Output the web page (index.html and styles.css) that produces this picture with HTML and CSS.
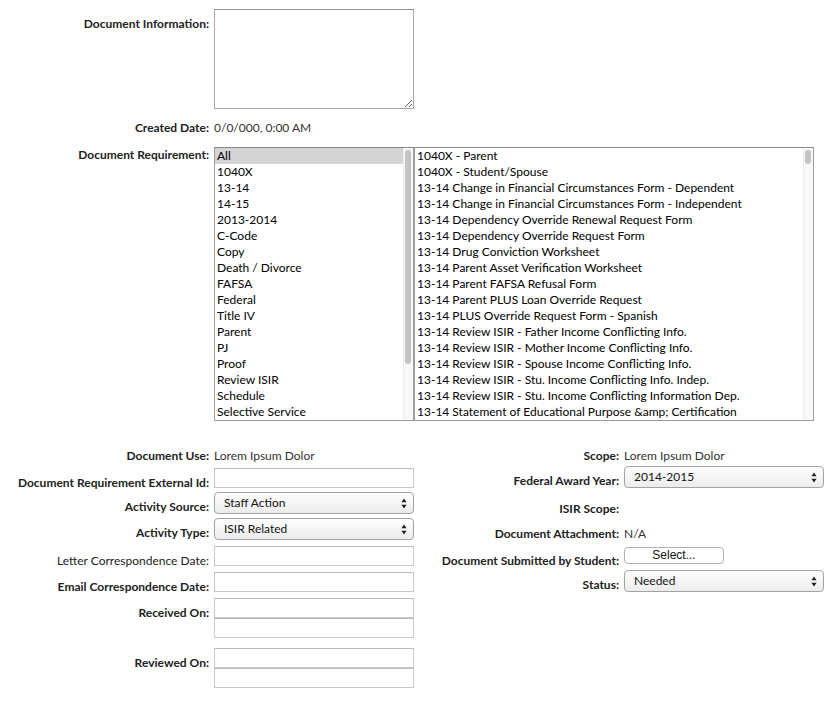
FILE: index.html
```html
<!DOCTYPE html>
<html>
<head>
<meta charset="utf-8">
<link rel="stylesheet" href="styles.css">
</head>
<body>
<div class="form">
  <div class="row row-info">
    <div class="label bold pad7">Document Information:</div>
    <textarea class="textarea"></textarea>
  </div>
  <div class="row row-created">
    <div class="label bold">Created Date:</div>
    <div class="value">0/0/000, 0:00 AM</div>
  </div>
  <div class="row row-req">
    <div class="label bold pad1">Document Requirement:</div>
    <div class="listbox list-left">
      <div class="items">
        <div class="item sel">All</div>
        <div class="item">1040X</div>
        <div class="item">13-14</div>
        <div class="item">14-15</div>
        <div class="item">2013-2014</div>
        <div class="item">C-Code</div>
        <div class="item">Copy</div>
        <div class="item">Death / Divorce</div>
        <div class="item">FAFSA</div>
        <div class="item">Federal</div>
        <div class="item">Title IV</div>
        <div class="item">Parent</div>
        <div class="item">PJ</div>
        <div class="item">Proof</div>
        <div class="item">Review ISIR</div>
        <div class="item">Schedule</div>
        <div class="item">Selective Service</div>
      </div>
      <div class="track"><div class="thumb thumb-long"></div></div>
    </div>
    <div class="listbox list-right">
      <div class="items">
        <div class="item">1040X - Parent</div>
        <div class="item">1040X - Student/Spouse</div>
        <div class="item">13-14 Change in Financial Circumstances Form - Dependent</div>
        <div class="item">13-14 Change in Financial Circumstances Form - Independent</div>
        <div class="item">13-14 Dependency Override Renewal Request Form</div>
        <div class="item">13-14 Dependency Override Request Form</div>
        <div class="item">13-14 Drug Conviction Worksheet</div>
        <div class="item">13-14 Parent Asset Verification Worksheet</div>
        <div class="item">13-14 Parent FAFSA Refusal Form</div>
        <div class="item">13-14 Parent PLUS Loan Override Request</div>
        <div class="item">13-14 PLUS Override Request Form - Spanish</div>
        <div class="item">13-14 Review ISIR - Father Income Conflicting Info.</div>
        <div class="item">13-14 Review ISIR - Mother Income Conflicting Info.</div>
        <div class="item">13-14 Review ISIR - Spouse Income Conflicting Info.</div>
        <div class="item">13-14 Review ISIR - Stu. Income Conflicting Info. Indep.</div>
        <div class="item">13-14 Review ISIR - Stu. Income Conflicting Information Dep.</div>
        <div class="item">13-14 Statement of Educational Purpose &amp;amp; Certification</div>
      </div>
      <div class="track"><div class="thumb thumb-short"></div></div>
    </div>
  </div>

  <div class="bottom">
    <div class="col">
      <div class="row">
        <div class="label bold">Document Use:</div>
        <div class="value">Lorem Ipsum Dolor</div>
      </div>
      <div class="row m4">
        <div class="label bold pad7">Document Requirement External Id:</div>
        <div class="input"></div>
      </div>
      <div class="row m4">
        <div class="label bold pad7">Activity Source:</div>
        <div class="select"><span>Staff Action</span><svg class="arrows" width="6" height="11" viewBox="0 0 6 11"><path d="M3 0.5 L5.6 4.2 H0.4 Z M3 10.5 L5.6 6.8 H0.4 Z" fill="#222"/></svg></div>
      </div>
      <div class="row m4">
        <div class="label bold pad7">Activity Type:</div>
        <div class="select"><span>ISIR Related</span><svg class="arrows" width="6" height="11" viewBox="0 0 6 11"><path d="M3 0.5 L5.6 4.2 H0.4 Z M3 10.5 L5.6 6.8 H0.4 Z" fill="#222"/></svg></div>
      </div>
      <div class="row m6">
        <div class="label pad7">Letter Correspondence Date:</div>
        <div class="input"></div>
      </div>
      <div class="row m6">
        <div class="label bold pad7">Email Correspondence Date:</div>
        <div class="input"></div>
      </div>
      <div class="row m6">
        <div class="label bold pad7">Received On:</div>
        <div class="stack"><div class="input"></div><div class="input"></div></div>
      </div>
      <div class="row m10">
        <div class="label bold pad7">Reviewed On:</div>
        <div class="stack"><div class="input"></div><div class="input"></div></div>
      </div>
    </div>
    <div class="col">
      <div class="row">
        <div class="label bold">Scope:</div>
        <div class="value">Lorem Ipsum Dolor</div>
      </div>
      <div class="row m2">
        <div class="label bold pad7">Federal Award Year:</div>
        <div class="select"><span>2014-2015</span><svg class="arrows" width="6" height="11" viewBox="0 0 6 11"><path d="M3 0.5 L5.6 4.2 H0.4 Z M3 10.5 L5.6 6.8 H0.4 Z" fill="#222"/></svg></div>
      </div>
      <div class="row m13">
        <div class="label bold">ISIR Scope:</div>
        <div class="value"></div>
      </div>
      <div class="row m9">
        <div class="label bold">Document Attachment:</div>
        <div class="value">N/A</div>
      </div>
      <div class="row m5">
        <div class="label bold pad5">Document Submitted by Student:</div>
        <div class="button">Select...</div>
      </div>
      <div class="row m6">
        <div class="label bold pad7">Status:</div>
        <div class="select"><span>Needed</span><svg class="arrows" width="6" height="11" viewBox="0 0 6 11"><path d="M3 0.5 L5.6 4.2 H0.4 Z M3 10.5 L5.6 6.8 H0.4 Z" fill="#222"/></svg></div>
      </div>
    </div>
  </div>
</div>
</body>
</html>
```
FILE: styles.css
```css
* { box-sizing: border-box; }
body {
  margin: 8px;
  font-family: Lato, "Open Sans", sans-serif;
  font-size: 12px;
  line-height: 16px;
  color: #222;
  background: #fff;
}
.row { display: flex; align-items: flex-start; }
.label {
  width: 206px;
  flex: none;
  text-align: right;
  padding-right: 5px;
  color: #222;
  white-space: nowrap;
}
.bold { font-weight: 700; }
.pad1 { margin-top: 0; padding-top: 0; }
.pad5 { margin-top: 6px; margin-bottom: -6px; }
.pad7 { margin-top: 7px; margin-bottom: -7px; }
.m2 { margin-top: 2px; }
.m4 { margin-top: 4px; }
.m5 { margin-top: 5px; }
.m6 { margin-top: 6px; }
.m9 { margin-top: 9px; }
.m10 { margin-top: 10px; }
.m13 { margin-top: 13px; }
.value { color: #333; min-height: 16px; }

.row-info { margin-top: 1px; }
.textarea {
  width: 200px;
  height: 100px;
  margin: 0;
  border: 1px solid #a8a8a8;
  border-top-color: #8f8f8f;
  padding: 2px;
  font: inherit;
  resize: both;
}
.row-created { margin-top: 12px; }
.row-created .label, .row-created .value { margin-top: -1px; }
.row-req { margin-top: 11px; }

.listbox {
  display: flex;
  height: 274px;
  border: 1px solid #9d9d9d;
  border-top-color: #8a8a8a;
  background: #fff;
  flex: none;
}
.list-left { width: 200px; }
.list-right { width: 400px; }
.items { flex: 1; overflow: hidden; white-space: nowrap; padding-top: 0; }
.item { height: 16px; line-height: 15px; padding-left: 2px; color: #000; }
.item.sel { background: #d4d4d4; }
.track {
  width: 10px;
  flex: none;
  background: #f8f8f8;
  border-left: 1px solid #ebebeb;
}
.thumb {
  width: 6px;
  margin: 2px 0 0 1px;
  border-radius: 3px;
  background: #c3c3c3;
}
.thumb-long { height: 214px; }
.thumb-short { height: 14px; }

.bottom { display: flex; margin-top: 27px; }
.col { width: 410px; flex: none; }

.input {
  width: 200px;
  height: 20px;
  border: 1px solid #c9c9c9;
  border-top-color: #bdbdbd;
  background: #fff;
}
.stack { display: flex; flex-direction: column; }

.select {
  width: 200px;
  height: 22px;
  display: flex;
  align-items: center;
  justify-content: space-between;
  padding: 0 6px 1px 9px;
  border: 1px solid #a3a3a3;
  border-radius: 4px;
  background: linear-gradient(#ffffff, #ececec);
  color: #111;
}
.arrows { flex: none; margin-top: 1px; }

.button {
  width: 100px;
  height: 17px;
  border: 1px solid #b0b0b0;
  border-radius: 4px;
  background: #fff;
  font-family: "Liberation Sans", Arial, sans-serif;
  font-size: 12px;
  line-height: 14px;
  text-align: center;
  color: #111;
}
```
